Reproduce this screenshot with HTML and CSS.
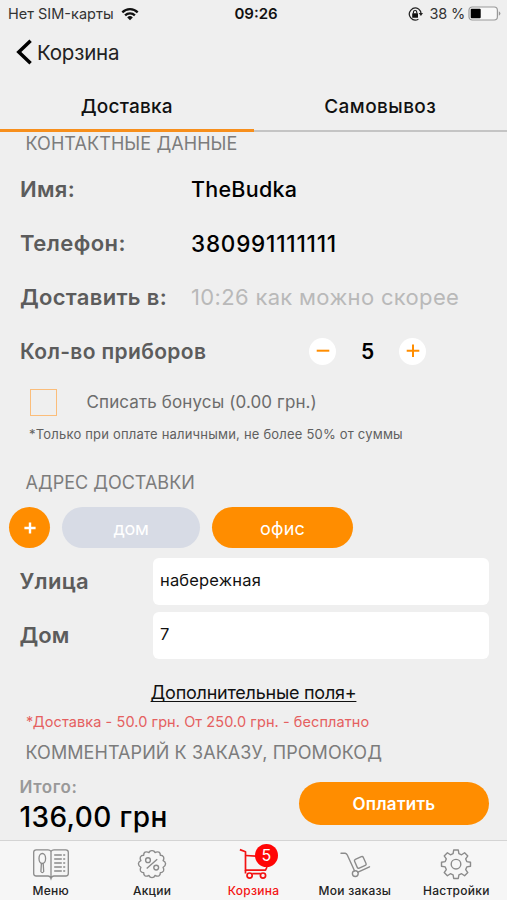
FILE: index.html
```html
<!DOCTYPE html>
<html lang="ru">
<head>
<meta charset="utf-8">
<meta name="viewport" content="width=device-width, initial-scale=1">
<title>Корзина</title>
<link rel="stylesheet" href="styles.css">
</head>
<body>
<div class="screen">
  <div class="status">
    <div class="status-left">
      <span>Нет SIM-карты</span>
      <svg width="18" height="14" viewBox="0 0 18 14"><g fill="none" stroke="#111" stroke-width="2.3"><path d="M1.3 5.4A10.9 10.9 0 0 1 16.7 5.4"/><path d="M4.1 8.4A6.9 6.9 0 0 1 13.9 8.4"/></g><path d="M9 13.2 6.2 10.4A4 4 0 0 1 11.8 10.4Z" fill="#111"/></svg>
    </div>
    <div class="clock">09:26</div>
    <div class="status-right">
      <svg class="lock" width="15" height="14" viewBox="0 0 15 14"><path d="M10.6 1.9A6 6 0 1 0 10.4 12.2M10.6 1.9A6 6 0 0 1 13 6.4" fill="none" stroke="#222" stroke-width="1.2"/><path d="M10.7 6H15L12.9 8.9Z" fill="#222"/><rect x="4.2" y="6.3" width="5.8" height="4.4" rx=".5" fill="#111"/><path d="M5.4 6.5V5.2a1.7 1.7 0 0 1 3.4 0v1.3" fill="none" stroke="#111" stroke-width="1.1"/></svg>
      <span class="pct">38 %</span>
      <svg width="33" height="15" viewBox="0 0 33 15"><rect x="1" y="1" width="28.4" height="13" rx="3.2" fill="#f8f8f8" stroke="#999" stroke-width="1.2"/><rect x="2.7" y="2.7" width="10" height="9.6" rx="1" fill="#000"/><path d="M30.8 5.2q1.6.8 1.6 2.3t-1.6 2.3z" fill="#999"/></svg>
    </div>
  </div>

  <header class="nav">
    <svg width="18" height="26" viewBox="0 0 18 26"><path d="M15.6 1.8 3.8 13 15.6 24.2" fill="none" stroke="#000" stroke-width="3.5"/></svg>
    <span>Корзина</span>
  </header>

  <div class="tabs">
    <div class="tab active">Доставка</div>
    <div class="tab pickup">Самовывоз</div>
  </div>

  <main>
    <h2 class="section">КОНТАКТНЫЕ ДАННЫЕ</h2>
    <div class="rows">
      <div class="row"><span class="label">Имя:</span><span class="value">TheBudka</span></div>
      <div class="row"><span class="label phone-label">Телефон:</span><span class="value phone">380991111111</span></div>
      <div class="row"><span class="label">Доставить в:</span><span class="value hint">10:26 как можно скорее</span></div>
      <div class="row"><span class="label count-label">Кол-во приборов</span>
        <div class="stepper">
          <span class="step"><svg width="14" height="14" viewBox="0 0 14 14"><path d="M.7 6.7H13.3" stroke="#ff8d00" stroke-width="2"/></svg></span>
          <span class="count">5</span>
          <span class="step"><svg width="14" height="14" viewBox="0 0 14 14"><path d="M.7 6.7H13.3M7 .4V13" stroke="#ff8d00" stroke-width="2"/></svg></span>
        </div>
      </div>
    </div>
    <div class="bonus"><span class="check"></span><span>Списать бонусы (0.00 грн.)</span></div>
    <div class="note">*Только при оплате наличными, не более 50% от суммы</div>

    <h2 class="section address">АДРЕС ДОСТАВКИ</h2>
    <div class="pills">
      <span class="add"><svg width="12" height="12" viewBox="0 0 12 12"><path d="M.4 6H11.6M6 .4V11.6" stroke="#fff" stroke-width="2.4"/></svg></span>
      <span class="pill home">дом</span>
      <span class="pill office">офис</span>
    </div>
    <div class="fields">
      <div class="field"><span class="label">Улица</span><span class="input">набережная</span></div>
      <div class="field"><span class="label house">Дом</span><span class="input">7</span></div>
    </div>
    <div class="more"><span>Дополнительные поля+</span></div>
    <div class="delivery">*Доставка - 50.0 грн. От 250.0 грн. - бесплатно</div>
    <h2 class="section comment">КОММЕНТАРИЙ К ЗАКАЗУ, ПРОМОКОД</h2>
  </main>

  <div class="checkout">
    <div class="total">
      <div class="total-label">Итого:</div>
      <div class="total-sum">136,00 грн</div>
    </div>
    <div class="pay">Оплатить</div>
  </div>

  <nav class="bar">
    <div class="item">
      <svg width="38" height="34" viewBox="0 0 38 34"><g fill="none" stroke="#8b8b8b" stroke-width="1.3"><path d="M19 4.3Q18 2.8 16 2.8H4.2Q1.7 2.8 1.7 5.3V26.5Q1.7 29 4.2 29H16Q18.2 29 19 31.5Q19.8 29 22 29H33.8Q36.3 29 36.3 26.5V5.3Q36.3 2.8 33.8 2.8H22Q20 2.8 19 4.3V31.5"/><ellipse cx="10.3" cy="11.5" rx="3.3" ry="5"/><path d="M9.4 16.3 8.9 24.5Q10.3 26.8 11.7 24.5L11.2 16.3"/><path d="M22.2 8H29.8M22.2 12H29.8M22.2 16H29.8M22.2 20H29.8M22.2 24H29.8M31.2 8H33.2M31.2 12H33.2M31.2 16H33.2M31.2 20H33.2M31.2 24H33.2"/></g></svg>
      <span>Меню</span>
    </div>
    <div class="item">
      <svg width="34" height="34" viewBox="0 0 34 34"><g fill="none" stroke="#8b8b8b" stroke-width="1.4" stroke-linejoin="round"><path d="M17 3.6Q19.2 3.4 20 5.6Q22.2 4.3 24 5.2Q25.5 6.2 25.3 8.3Q27.6 8.2 28.6 10Q29.3 11.8 28.1 13.7Q30.4 14.6 30.6 16.8Q30.4 19.4 28.1 20.3Q29.3 22.3 28.5 24Q27.5 25.7 25.3 25.7Q25.5 27.9 23.9 28.8Q22.1 29.7 20 28.4Q19.2 30.6 17 30.6Q14.8 30.6 14 28.4Q11.9 29.7 10.1 28.8Q8.5 27.9 8.7 25.7Q6.5 25.7 5.5 24Q4.7 22.3 5.9 20.3Q3.6 19.4 3.4 16.8Q3.6 14.6 5.9 13.7Q4.7 11.8 5.4 10Q6.4 8.2 8.7 8.3Q8.5 6.2 10 5.2Q11.8 4.3 14 5.6Q14.8 3.4 17 3.6Z"/><path d="M11.7 21.6 22.2 12.3"/><circle cx="13" cy="13.2" r="2.4"/><circle cx="21.2" cy="20.6" r="2.4"/></g></svg>
      <span>Акции</span>
    </div>
    <div class="item on">
      <svg width="34" height="34" viewBox="0 0 34 34"><g fill="none" stroke="#f31313" stroke-width="1.7" stroke-linejoin="round"><path d="M3.9 2.6 9.5 4.8V23.2H29.5L31 20"/><path d="M9.5 8.5 32 10"/><circle cx="13.6" cy="28.6" r="2.6"/><circle cx="27" cy="28.6" r="2.6"/><path d="M9.5 23V26.6M16.2 26.6H24.6"/></g></svg>
      <span class="badge">5</span>
      <span>Корзина</span>
    </div>
    <div class="item">
      <svg width="34" height="34" viewBox="0 0 34 34"><g fill="none" stroke="#8b8b8b" stroke-width="1.4" stroke-linejoin="round" stroke-linecap="round"><path d="M3 6.3H7.2Q8.6 6.5 9.3 8L16.5 23.8"/><circle cx="17.3" cy="26.6" r="2.9"/><path d="M20 25.2 31.5 19.8"/><rect x="17.5" y="10.6" width="9.6" height="9.6" rx="1.5" transform="rotate(-24 22.3 15.4)"/></g></svg>
      <span>Мои заказы</span>
    </div>
    <div class="item">
      <svg width="34" height="34" viewBox="0 0 34 34"><g fill="none" stroke="#8b8b8b" stroke-width="1.4" stroke-linejoin="round"><path d="M14.7 3H19.3L19.9 6.7L22.6 7.8L25.6 5.7L28.8 8.9L26.7 11.9L27.8 14.6L31.5 15.2V19.2L27.8 19.9L26.7 22.6L28.8 25.6L25.6 28.8L22.6 26.7L19.9 27.8L19.3 31.5H14.7L14.1 27.8L11.4 26.7L8.4 28.8L5.2 25.6L7.3 22.6L6.2 19.9L2.5 19.2V15.2L6.2 14.6L7.3 11.9L5.2 8.9L8.4 5.7L11.4 7.8L14.1 6.7Z"/><circle cx="17" cy="17.2" r="4.8"/></g></svg>
      <span>Настройки</span>
    </div>
  </nav>
</div>
</body>
</html>
```
FILE: styles.css
```css
* { box-sizing: border-box; }
body { margin: 0; background: #efefef; color: #000; font-family: Inter, "Liberation Sans", sans-serif; }
.screen { width: 507px; height: 900px; overflow: hidden; display: flex; flex-direction: column; white-space: nowrap; }
svg { display: block; flex: none; }

.status { height: 27px; display: grid; grid-template-columns: 1fr auto 1fr; align-items: center; padding: 0 6px 0 8px; font-size: 14.5px; color: #333; }
.status-left { display: flex; align-items: center; gap: 7px; }
.clock { font-size: 15px; font-weight: 600; color: #111; padding-left: 3px; }
.status-right { display: flex; align-items: center; justify-content: flex-end; }
.lock { margin-right: 7px; }
.pct { letter-spacing: -0.2px; margin-right: 3px; }

.nav { height: 50px; display: flex; align-items: center; gap: 4px; padding-left: 15px; font-size: 20.5px; letter-spacing: -0.2px; color: #222; }

.tabs { display: flex; height: 55px; }
.tab { flex: 1; display: flex; justify-content: center; padding-top: 19px; line-height: 22px; font-size: 19px; font-weight: 500; letter-spacing: 0.21px; color: #111; border-bottom: 2px solid #c4c4c4; }
.tab.active { border-bottom: 3px solid #f78f1c; }
.tab.pickup { letter-spacing: 0.42px; }

.section { margin: 0; height: 22px; line-height: 23px; padding-left: 25.5px; font-size: 18px; font-weight: 400; letter-spacing: 0.08px; color: #7c7c7c; }
main > .section:first-child { line-height: 24px; }
.rows { margin-top: 8px; }
.row { height: 54px; display: flex; align-items: center; padding-left: 20px; }
.label { flex: none; font-size: 22px; font-weight: 600; letter-spacing: 0.3px; color: #5c5c5c; }
.row .label { width: 171px; }
.row .phone-label { letter-spacing: 0.45px; }
.row .count-label { width: 289px; font-size: 21px; letter-spacing: 0.34px; }
.value { font-size: 21.5px; font-weight: 500; letter-spacing: 0.25px; }
.phone { font-size: 22.5px; letter-spacing: 0.79px; }
.hint { font-size: 22px; font-weight: 400; letter-spacing: 0.33px; color: #b9b9b9; }
.stepper { display: flex; align-items: center; }
.step { width: 27px; height: 27px; border-radius: 50%; background: #fff; display: flex; align-items: center; justify-content: center; }
.count { width: 63px; text-align: center; font-size: 21px; font-weight: 600; }

.bonus { height: 48px; display: flex; align-items: center; gap: 29.5px; padding-left: 30px; font-size: 17px; letter-spacing: 0.12px; color: #6c6c6c; }
.check { width: 27px; height: 27px; border: 1px solid #fbbd7a; }
.note { height: 17px; line-height: 17px; padding-left: 29px; font-size: 13px; letter-spacing: 0.2px; color: #606060; }
.address { margin-top: 28px; letter-spacing: 0; }

.pills { display: flex; margin-top: 14px; height: 41px; padding-left: 9px; }
.add { width: 41px; border-radius: 50%; background: #ff8d00; display: flex; align-items: center; justify-content: center; }
.pill { border-radius: 21px; display: flex; align-items: center; justify-content: center; font-size: 18px; padding-top: 1px; color: #fff; }
.home { width: 138px; margin-left: 12px; background: #d7dbe5; letter-spacing: -0.3px; }
.office { width: 141px; margin-left: 12px; background: #ff8d00; letter-spacing: 0.2px; }

.fields { margin-top: 10px; display: grid; gap: 7px; }
.field { height: 47px; display: flex; align-items: center; padding: 0 18px 0 19.5px; }
.field .label { width: 133.5px; padding-bottom: 1px; }
.field .house { letter-spacing: 0; }
.input { flex: 1; height: 47px; line-height: 45px; padding-left: 7px; border-radius: 6px; background: #fff; font-size: 16.5px; letter-spacing: 0.17px; color: #111; }

.more { margin-top: 23px; height: 22px; line-height: 22px; text-align: center; font-size: 18px; letter-spacing: -0.24px; color: #111; }
.more span { text-decoration: underline; text-decoration-thickness: 1.3px; text-underline-offset: 2px; text-decoration-skip-ink: none; }
.delivery { margin-top: 9px; height: 18px; line-height: 18px; padding-left: 26px; font-size: 14.5px; letter-spacing: 0.08px; color: #e56060; }
.comment { margin-top: 10px; }

.checkout { flex: 1; display: flex; justify-content: space-between; padding: 14px 18px 0 19.5px; }
.total-label { height: 20px; line-height: 20px; font-size: 17px; font-weight: 600; letter-spacing: 0.55px; color: #999; }
.total-sum { height: 41px; line-height: 41px; font-size: 28px; font-weight: 500; letter-spacing: 0.4px; }
.pay { width: 190px; height: 43px; margin-top: 5px; border-radius: 22px; background: #ff8d00; color: #fff; font-size: 17px; font-weight: 600; letter-spacing: 0.29px; display: flex; align-items: center; justify-content: center; }

.bar { height: 60px; display: grid; grid-template-columns: repeat(5, 1fr); background: #f6f6f6; border-top: 1px solid #d4d4d4; }
.item { position: relative; display: flex; flex-direction: column; align-items: center; gap: 1px; padding-top: 6px; font-size: 12px; font-weight: 500; line-height: 17px; letter-spacing: 0.26px; color: #222; }
.item.on { color: #f31313; }
.badge { position: absolute; left: 52px; top: 3px; width: 23px; height: 23px; border-radius: 50%; background: #ff0505; color: #fff; font-size: 16px; font-weight: 400; line-height: 23px; letter-spacing: 0; text-align: center; }
```
